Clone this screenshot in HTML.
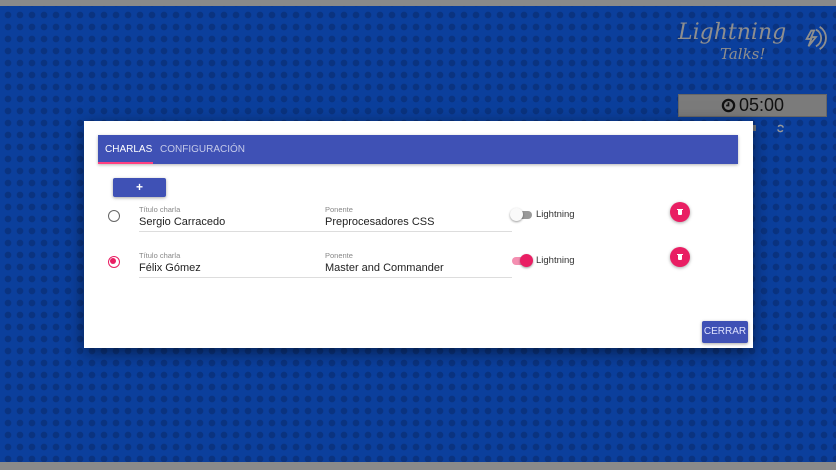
<!DOCTYPE html>
<html><head><meta charset="utf-8"><style>
*{box-sizing:border-box;margin:0;padding:0}
body{width:836px;height:470px;overflow:hidden;position:relative;font-family:"Liberation Sans",Arial,sans-serif;background:#0b3f9c;
background-image:radial-gradient(circle,#0a3380 3px,transparent 3.6px);background-size:12px 12px;background-position:2px 9px}
.bar{position:absolute;left:0;width:836px;background:#8a8a8a}
.logo{position:absolute;left:678px;top:20px;color:#8e8e8e;font-family:"DejaVu Serif",serif;font-style:italic}
.timer{position:absolute;left:678px;top:94px;width:149px;height:23px;background:#7b7b7b;border:1px solid #666;display:flex;align-items:center;justify-content:center;font-family:"Liberation Sans",sans-serif;font-size:18px;color:#111}
.dlg{position:absolute;left:84px;top:121px;width:669px;height:227px;background:#fff;box-shadow:0 4px 16px rgba(0,0,0,.5)}
.tabs{position:absolute;left:14px;top:14px;width:640px;height:29px;background:#3f51b5;box-shadow:0 1px 3px rgba(0,0,0,.3)}
.tab{position:absolute;top:9px;font-size:10px;color:#fff}
.add{position:absolute;left:29px;top:57px;width:53px;height:19px;background:#3f51b5;border-radius:2px;box-shadow:0 1px 3px rgba(0,0,0,.35);color:#fff;text-align:center;font-weight:bold;font-size:12px;line-height:18px}
.radio{position:absolute;left:24px;width:12px;height:12px;border-radius:50%;border:1.6px solid #666}
.lbl{position:absolute;font-size:7.5px;color:#888}
.val{position:absolute;font-size:11px;color:#222}
.line{position:absolute;left:55px;width:373px;height:1px;background:#ddd}
.sw{position:absolute;left:428px}
.trk{position:absolute;left:0;top:3px;width:20px;height:8px;border-radius:4px}
.th{position:absolute;top:0;width:13px;height:13px;border-radius:50%;box-shadow:0 1px 2px rgba(0,0,0,.4)}
.swl{position:absolute;left:24px;top:1px;font-size:9.5px;color:#333}
.del{position:absolute;left:586px;width:20px;height:20px;border-radius:50%;background:#e91e63;box-shadow:0 1px 3px rgba(0,0,0,.35)}
.del:after{content:"";position:absolute;left:8px;top:8px;width:4px;height:5px;background:#fff;border-radius:0 0 1px 1px}
.del:before{content:"";position:absolute;left:7px;top:7px;width:6px;height:1px;background:#fff}
.btn{position:absolute;left:618px;top:200px;width:46px;height:22px;background:#3f51b5;border-radius:2px;box-shadow:0 1px 3px rgba(0,0,0,.35);color:#dfe3ff;font-size:10px;text-align:center;line-height:22px}
</style></head><body>
<div class="bar" style="top:0;height:6px"></div>
<div class="bar" style="top:462px;height:8px"></div>
<div class="logo"><div style="font-size:22px;line-height:26px">Lightning</div><div style="font-size:15px;margin-left:42px;line-height:16px">Talks!</div></div>
<svg style="position:absolute;left:802px;top:24px" width="26" height="28" viewBox="0 0 28 28" fill="none" stroke="#8e8e8e" stroke-width="2"><path d="M10 6l-5 9h5l-3 8 8-10h-5l3-7z"/><path d="M15 5a10 10 0 0 1 0 18"/><path d="M19 2a14 14 0 0 1 0 24"/></svg>
<div class="timer"><svg width="15" height="15" viewBox="0 0 16 16" style="margin-right:3px"><circle cx="8" cy="8" r="6" fill="none" stroke="#111" stroke-width="2.4"/><path d="M8 4.5V8H5.5" stroke="#111" stroke-width="1.8" fill="none"/></svg>05:00</div>
<div style="position:absolute;left:752px;top:125px;width:4px;height:6px;background:#777"></div>
<svg style="position:absolute;left:776px;top:124px" width="9" height="9" viewBox="0 0 10 10" fill="none" stroke="#999" stroke-width="1.6"><path d="M8 4A3 3 0 0 0 2.5 3M2 6a3 3 0 0 0 5.5 1"/></svg>
<div class="dlg">
 <div class="tabs"><span class="tab" style="left:7px">CHARLAS</span><span class="tab" style="left:62px;color:#c5cae9">CONFIGURACIÓN</span><div style="position:absolute;left:0;top:27px;width:55px;height:2px;background:#ff4081"></div></div>
 <div class="add">+</div>
 <div class="radio" style="top:89px"></div>
 <div class="lbl" style="left:55px;top:84px">Título charla</div><div class="val" style="left:55px;top:95px">Sergio Carracedo</div>
 <div class="lbl" style="left:241px;top:84px">Ponente</div><div class="val" style="left:241px;top:95px">Preprocesadores CSS</div>
 <div class="line" style="top:110px"></div>
 <div class="sw" style="top:87px"><div class="trk" style="background:#999"></div><div class="th" style="left:-2px;background:#fafafa"></div><div class="swl">Lightning</div></div>
 <div class="del" style="top:81px"></div>
 <div class="radio" style="top:135px;border-color:#e91e63"><div style="position:absolute;left:1.4px;top:1.4px;width:6px;height:6px;border-radius:50%;background:#e91e63"></div></div>
 <div class="lbl" style="left:55px;top:130px">Título charla</div><div class="val" style="left:55px;top:141px">Félix Gómez</div>
 <div class="lbl" style="left:241px;top:130px">Ponente</div><div class="val" style="left:241px;top:141px">Master and Commander</div>
 <div class="line" style="top:156px"></div>
 <div class="sw" style="top:133px"><div class="trk" style="background:#f48fb1"></div><div class="th" style="left:8px;background:#e91e63"></div><div class="swl">Lightning</div></div>
 <div class="del" style="top:126px"></div>
 <div class="btn">CERRAR</div>
</div>
</body></html>
